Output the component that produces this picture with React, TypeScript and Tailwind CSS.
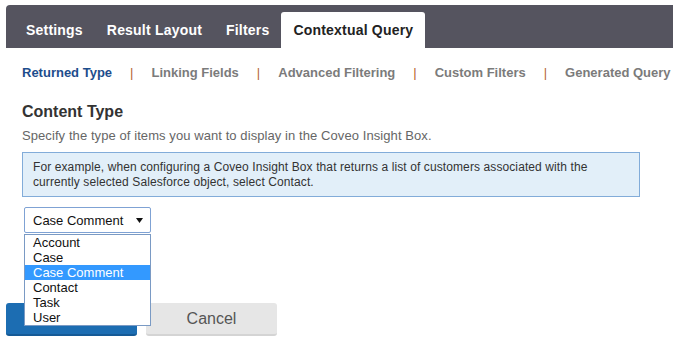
import React from "react";

const font = { fontFamily: '"Liberation Sans", Arial, sans-serif' };

export default function App() {
  const tabs = ["Settings", "Result Layout", "Filters"];
  const sub = ["Linking Fields", "Advanced Filtering", "Custom Filters", "Generated Query"];
  const options = ["Account", "Case", "Case Comment", "Contact", "Task", "User"];
  return (
    <div className="w-[674px] h-[340px] bg-white overflow-hidden pt-[5px]" style={font}>
      <div className="ml-[6px] mr-[1px] h-[43px] bg-[#55545f] rounded-tl-[4px] flex items-end pl-[8px]">
        {tabs.map((t) => (
          <div key={t} className="h-[36px] px-3 flex items-center text-[14px] font-bold text-white whitespace-nowrap tracking-[0.2px]">
            {t}
          </div>
        ))}
        <div className="h-[36px] px-3 flex items-center text-[14px] font-bold text-[#222] bg-white rounded-t-[3px] whitespace-nowrap tracking-[0.2px]">
          Contextual Query
        </div>
      </div>

      <div className="pl-[22px]">
        <div className="mt-[15px] h-[20px] leading-[20px] flex text-[13px] font-bold whitespace-nowrap">
          <span className="text-[#1d4d8c]">Returned Type</span>
          {sub.map((s) => (
            <React.Fragment key={s}>
              <span className="px-[18px] text-[#b5652f] font-normal">|</span>
              <span className="text-[#7b7b7b]">{s}</span>
            </React.Fragment>
          ))}
        </div>

        <div className="mt-[19px] text-[16px] leading-[20px] font-bold text-[#333]">Content Type</div>
        <div className="mt-[5px] text-[13px] leading-[18px] text-[#666] tracking-[0.08px]">
          Specify the type of items you want to display in the Coveo Insight Box.
        </div>

        <div className="mt-[7px] w-[618px] border border-[#82acd9] bg-[#e2eff9] pl-[10px] pr-2 pt-[7px] pb-[6px] text-[12px] leading-[15px] text-[#333] tracking-[0.1px]">
          For example, when configuring a Coveo Insight Box that returns a list of customers associated with the
          <br />
          currently selected Salesforce object, select Contact.
        </div>
      </div>

      <div className="relative ml-[24px] mt-[10px] w-[127px]">
        <div className="h-[26px] border border-[#7fa2d4] rounded-[2px] bg-white flex items-center pl-[8px] pr-[7px] pt-[1px] text-[13px] text-[#111]">
          <span className="flex-1">Case Comment</span>
          <svg width="7" height="5" viewBox="0 0 7 5">
            <polygon points="0,0 7,0 3.5,5" fill="#111" />
          </svg>
        </div>
        <div className="absolute left-0 top-[27px] w-[127px] border border-[#7a9ac4] bg-white z-10 text-[13px] leading-[15px] text-[#111]">
          {options.map((o) => (
            <div
              key={o}
              className={
                o === "Case Comment"
                  ? "pl-[8px] bg-[#3399ff] text-white"
                  : "pl-[8px]"
              }
            >
              {o}
            </div>
          ))}
        </div>
      </div>

      <div className="ml-[6px] mt-[70px] flex gap-[9px]">
        <button className="w-[131px] h-[33px] rounded-[3px] bg-[#1c6db2] border-b-2 border-[#155a96] text-white text-[16px]">
          Save
        </button>
        <button className="w-[131px] h-[33px] rounded-[3px] bg-[#e6e6e6] border-b-2 border-[#d4d4d4] text-[#555] text-[16px]">
          Cancel
        </button>
      </div>
    </div>
  );
}
